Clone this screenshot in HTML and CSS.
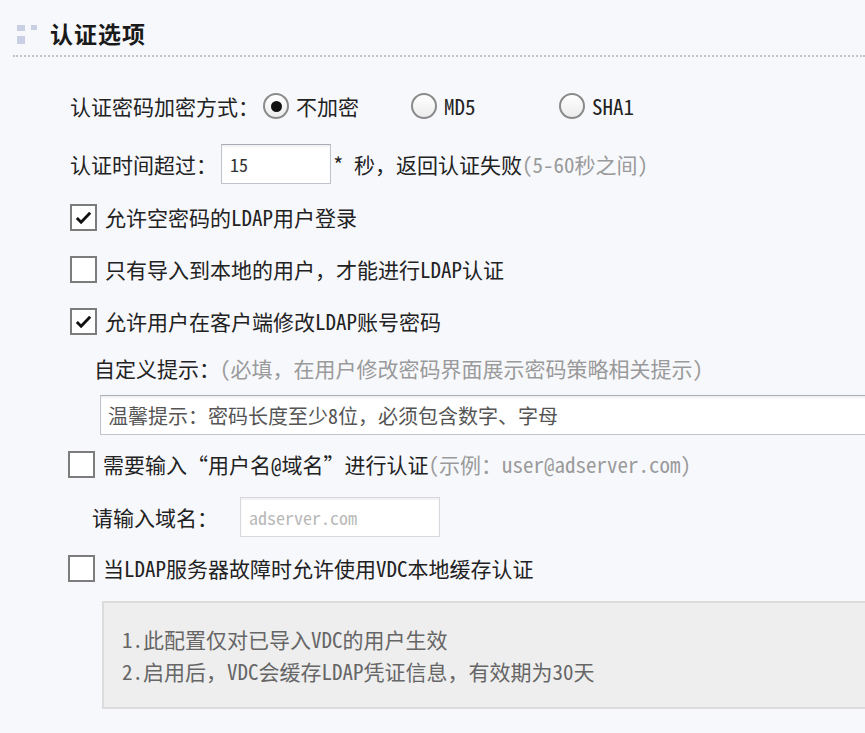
FILE: index.html
```html
<!DOCTYPE html>
<html lang="zh-CN">
<head>
  <meta charset="UTF-8">
  <meta name="viewport" content="width=device-width, initial-scale=1.0">
  <title>认证选项</title>
  <link rel="stylesheet" href="styles.css">
</head>
<body>
  <div class="page">
    <!-- 标题 -->
    <div class="section-head">
      <span class="head-icon"><i></i><i></i><i></i></span>
      <h2>认证选项</h2>
    </div>

    <div class="options">
      <!-- 加密方式 -->
      <div class="row">
        <span class="label">认证密码加密方式：</span>
        <label class="radio-opt"><span class="radio on"></span>不加密</label>
        <label class="radio-opt"><span class="radio"></span>MD5</label>
        <label class="radio-opt"><span class="radio"></span>SHA1</label>
      </div>

      <!-- 超时 -->
      <div class="row row-timeout">
        <span class="label">认证时间超过：</span>
        <input type="text" class="text-input small" value="15">
        <span>* 秒，返回认证失败</span><span class="tip">(5-60秒之间)</span>
      </div>

      <label class="row check-row"><span class="cb on"><svg viewBox="0 0 22 22"><path d="M4 11.5l4.5 4.5L18 6" /></svg></span>允许空密码的LDAP用户登录</label>
      <label class="row check-row"><span class="cb"></span>只有导入到本地的用户，才能进行LDAP认证</label>
      <label class="row check-row"><span class="cb on"><svg viewBox="0 0 22 22"><path d="M4 11.5l4.5 4.5L18 6" /></svg></span>允许用户在客户端修改LDAP账号密码</label>

      <div class="sub">
        <div class="row sub-label">自定义提示：<span class="tip">(必填，在用户修改密码界面展示密码策略相关提示)</span></div>
        <input type="text" class="text-input wide" value="温馨提示：密码长度至少8位，必须包含数字、字母">
      </div>

      <label class="row check-row second"><span class="cb"></span>需要输入“用户名@域名”进行认证<span class="tip">(示例：user@adserver.com)</span></label>
      <div class="row domain-row">
        <span class="label">请输入域名：</span>
        <input type="text" class="text-input domain" placeholder="adserver.com">
      </div>

      <label class="row check-row second"><span class="cb"></span>当LDAP服务器故障时允许使用VDC本地缓存认证</label>

      <div class="note">
        <p>1.此配置仅对已导入VDC的用户生效</p>
        <p>2.启用后，VDC会缓存LDAP凭证信息，有效期为30天</p>
      </div>
    </div>
  </div>
</body>
</html>
```

FILE: styles.css
```css
body {
  margin: 0;
  background-color: #f7f8fc;
  font-family: "Noto Sans Mono CJK SC", "Noto Sans CJK SC", sans-serif;
  font-size: 21px;
  color: #222;
  overflow: hidden;
}

.page {
  width: 865px;
  height: 733px;
  overflow: hidden;
}

/* 标题 */
.section-head {
  display: flex;
  align-items: center;
  height: 36px;
  margin: 15px 0 0 13px;
  padding-bottom: 4px;
  border-bottom: 2px dotted #c4c4c4;
}

.head-icon {
  display: grid;
  grid-template-columns: 8px 6px;
  grid-template-rows: 6px 8px;
  column-gap: 6px;
  row-gap: 5px;
  margin: 2px 13px 0 4px;
}

.head-icon i {
  background-color: #c9d0e3;
}

.head-icon i:nth-child(2) {
  height: 5px;
}

.section-head h2 {
  margin: 0;
  font-size: 23px;
  font-weight: bold;
  color: #1a1a1a;
  letter-spacing: 1px;
}

/* 选项 */
.options {
  padding: 29px 0 0 70px;
}

.row {
  display: flex;
  align-items: center;
  height: 40px;
  line-height: 40px;
  white-space: nowrap;
}

.label {
  margin-right: 4px;
}

.radio-opt {
  display: flex;
  align-items: center;
  width: 148px;
}

.radio {
  width: 22px;
  height: 22px;
  border: 2px solid #8a8a8a;
  border-radius: 50%;
  background: linear-gradient(#ffffff, #ececec);
  margin-right: 7px;
  display: flex;
  align-items: center;
  justify-content: center;
}

.radio.on::after {
  content: "";
  width: 11px;
  height: 11px;
  border-radius: 50%;
  background-color: #111;
}

.row-timeout {
  margin-top: 18px;
}

.text-input {
  box-sizing: border-box;
  height: 40px;
  border: 1px solid #bfc3cc;
  border-top-color: #a9adb6;
  background-color: #fff;
  box-shadow: inset 0 2px 2px rgba(0, 0, 0, 0.06);
  font-family: inherit;
  font-size: 18px;
  color: #333;
  padding: 0 8px;
  outline: none;
}

.text-input.small {
  width: 110px;
  margin-right: 2px;
}

.tip {
  color: #9a9a9a;
}

.check-row {
  height: 52px;
  line-height: 52px;
}

.row-timeout + .check-row {
  margin-top: 7px;
}

.cb {
  box-sizing: border-box;
  width: 27px;
  height: 27px;
  border: 2px solid #7c7c7c;
  background-color: #fff;
  margin-right: 8px;
  display: flex;
  align-items: center;
  justify-content: center;
}

.cb svg {
  width: 21px;
  height: 21px;
  fill: none;
  stroke: #111;
  stroke-width: 3;
}

.sub {
  padding-left: 24px;
}

.sub-label {
  margin-top: 1px;
}

.text-input.wide {
  width: 800px;
  margin: 7px 0 0 6px;
  font-size: 20px;
  color: #555;
  padding-left: 7px;
}

.check-row.second {
  margin-left: -2px;
  margin-top: 3px;
}

.domain-row {
  height: 44px;
  padding-left: 22px;
  margin-top: 5px;
}

.domain-row .label {
  margin-right: 22px;
}

.text-input.domain {
  width: 200px;
  border-color: #d6d8de;
  font-size: 18px;
}

.text-input.domain::placeholder {
  color: #b8b8b8;
}

.note {
  box-sizing: border-box;
  width: 790px;
  height: 108px;
  margin: 7px 0 0 32px;
  padding: 20px 18px;
  background-color: #eeeeee;
  border: 2px solid #dcdcdc;
  color: #666;
}

.note p {
  margin: 0;
  line-height: 32px;
}
```
